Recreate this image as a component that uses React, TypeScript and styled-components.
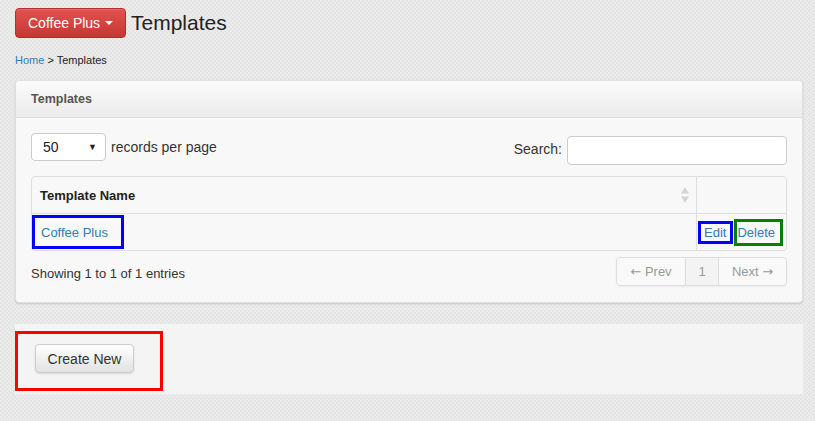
import React from 'react'
import styled, { createGlobalStyle } from 'styled-components'

const GlobalStyle = createGlobalStyle`
    html, body {
        margin: 0;
        padding: 0;
    }
    body {
        font-family: "Liberation Sans", Arial, sans-serif;
        color: #333;
        background-color: #ececec;
        background-image: conic-gradient(#e4e4e4 25%, transparent 0 50%, #e4e4e4 0 75%, transparent 0);
        background-size: 4px 4px;
        min-height: 421px;
    }
`

const Page = styled.div`
    width: 788px;
    padding: 8px 0 0 15px;
`

const Header = styled.div`
    display: flex;
    align-items: center;
    gap: 5px;
    height: 30px;
`

const BrandButton = styled.button`
    display: flex;
    align-items: center;
    box-sizing: border-box;
    width: 111px;
    height: 30px;
    padding: 0 0 0 12px;
    border: 1px solid #b52b27;
    border-radius: 4px;
    background: linear-gradient(#e2534f, #c63632);
    color: #fff;
    font: 14px "Liberation Sans", Arial, sans-serif;
    box-shadow: inset 0 1px 0 rgba(255,255,255,.15);
`

const Caret = styled.span`
    width: 0;
    height: 0;
    margin-left: 5px;
    border-top: 4px solid #fff;
    border-left: 4px solid transparent;
    border-right: 4px solid transparent;
`

const Title = styled.h1`
    margin: 0;
    font-size: 21px;
    font-weight: normal;
    color: #222;
    line-height: 26px;
`

const Breadcrumb = styled.div`
    margin-top: 14px;
    font-size: 11px;
    line-height: 16px;
    color: #222;
`

const Link = styled.a`
    color: #337ab7;
    text-decoration: none;
`

const Panel = styled.div`
    margin-top: 12px;
    border: 1px solid #e0e0e0;
    border-radius: 4px;
    background: #f8f8f8;
    box-shadow: 0 1px 2px rgba(0,0,0,.15);
`

const PanelHeading = styled.div`
    height: 36px;
    display: flex;
    align-items: center;
    padding: 0 15px;
    border-bottom: 1px solid #dcdcdc;
    border-radius: 4px 4px 0 0;
    background: linear-gradient(#fbfbfb, #ebebeb);
    font-size: 12.5px;
    font-weight: bold;
    color: #555;
`

const PanelBody = styled.div`
    padding: 15px 15px 16px;
`

const Controls = styled.div`
    display: flex;
    justify-content: space-between;
    align-items: flex-start;
    height: 32px;
    margin-bottom: 11px;
`

const Group = styled.div<{ $top?: number }>`
    display: flex;
    align-items: center;
    gap: 5px;
    padding-top: ${p => p.$top || 0}px;
    font-size: 14px;
    color: #333;
`

const FakeSelect = styled.div`
    box-sizing: border-box;
    width: 75px;
    height: 28px;
    display: flex;
    align-items: center;
    justify-content: space-between;
    padding: 0 8px 0 11px;
    border: 1px solid #ccc;
    border-radius: 4px;
    background: #fff;
    font-size: 14px;
    color: #222;
    > .arrow {
        font-size: 9px;
    }
`

const SearchLabel = styled.span`
    margin-top: -3px;
`

const SearchInput = styled.input`
    box-sizing: border-box;
    width: 220px;
    height: 29px;
    border: 1px solid #ccc;
    border-radius: 4px;
    background: #fff;
    outline: none;
`

const Table = styled.table`
    width: 100%;
    border-collapse: separate;
    border-spacing: 0;
    border: 1px solid #dedede;
    border-radius: 4px;
    font-size: 13px;
    th, td {
        padding: 0;
        height: 36px;
        text-align: left;
    }
    th {
        border-bottom: 1px solid #dedede;
        font-weight: bold;
        color: #222;
    }
    th + th, td + td {
        border-left: 1px solid #dedede;
        width: 89px;
    }
`

const HeadCell = styled.div`
    display: flex;
    align-items: center;
    justify-content: space-between;
    padding: 0 7px 0 8px;
`

const NameBox = styled.div`
    box-sizing: border-box;
    width: 92px;
    height: 34px;
    display: flex;
    align-items: center;
    padding-left: 6px;
    border: 3px solid #0000ff;
`

const Actions = styled.div`
    display: flex;
    align-items: center;
    justify-content: flex-end;
    gap: 1px;
    padding-right: 3px;
`

const ActionBox = styled.div<{ $color: string; $pad: string; $lh: number }>`
    border: 3px solid ${p => p.$color};
    padding: ${p => p.$pad};
    line-height: ${p => p.$lh}px;
`

const Footer = styled.div`
    display: flex;
    justify-content: space-between;
    align-items: center;
    margin-top: 6px;
    font-size: 13px;
    color: #333;
    > span {
        padding-top: 3px;
    }
`

const Pager = styled.div`
    display: flex;
    border: 1px solid #ddd;
    border-radius: 4px;
    box-shadow: 0 1px 2px rgba(0,0,0,.05);
`

const PageItem = styled.span<{ $active?: boolean; $width: number }>`
    box-sizing: border-box;
    width: ${p => p.$width}px;
    text-align: center;
    line-height: 27px;
    font-size: 13px;
    color: #999;
    background: ${p => (p.$active ? '#f3f3f3' : '#f9f9f9')};
    & + & {
        border-left: 1px solid #ddd;
    }
    &:first-child {
        border-radius: 4px 0 0 4px;
    }
    &:last-child {
        border-radius: 0 4px 4px 0;
    }
`

const Arrow = styled.span`
    font-family: "DejaVu Sans", sans-serif;
    font-size: 13px;
`

const Well = styled.div`
    margin-top: 21px;
    height: 70px;
    padding-top: 7px;
    box-sizing: border-box;
    background: #f4f4f4;
`

const Highlight = styled.div`
    box-sizing: border-box;
    width: 148px;
    height: 60px;
    padding: 10px 0 0 17px;
    border: 3px solid #ff0000;
`

const DefaultButton = styled.button`
    width: 99px;
    height: 29px;
    border: 1px solid #ccc;
    border-radius: 4px;
    background: linear-gradient(#fff, #e2e2e2);
    box-shadow: 0 1px 2px rgba(0,0,0,.12);
    font: 14px "Liberation Sans", Arial, sans-serif;
    color: #333;
`

function SortIcon() {
    return (
        <svg width="8" height="16" viewBox="0 0 8 16">
            <path d="M4 0 L8 6.5 L0 6.5 Z" fill="#d4d4d4" />
            <path d="M0 9.5 L8 9.5 L4 16 Z" fill="#d4d4d4" />
        </svg>
    )
}

function App() {
    return (
        <Page>
            <GlobalStyle />
            <Header>
                <BrandButton>Coffee Plus<Caret /></BrandButton>
                <Title>Templates</Title>
            </Header>
            <Breadcrumb><Link href="#">Home</Link> &gt; Templates</Breadcrumb>
            <Panel>
                <PanelHeading>Templates</PanelHeading>
                <PanelBody>
                    <Controls>
                        <Group>
                            <FakeSelect><span>50</span><span className="arrow">▼</span></FakeSelect>
                            <span>records per page</span>
                        </Group>
                        <Group $top={3}>
                            <SearchLabel>Search:</SearchLabel>
                            <SearchInput />
                        </Group>
                    </Controls>
                    <Table>
                        <thead>
                            <tr>
                                <th><HeadCell>Template Name<SortIcon /></HeadCell></th>
                                <th></th>
                            </tr>
                        </thead>
                        <tbody>
                            <tr>
                                <td><NameBox><Link href="#">Coffee Plus</Link></NameBox></td>
                                <td>
                                    <Actions>
                                        <ActionBox $color="#0000ff" $pad="0 4px 0 3px" $lh={17}><Link href="#">Edit</Link></ActionBox>
                                        <ActionBox $color="#008000" $pad="0 5px 0 0" $lh={21}><Link href="#">Delete</Link></ActionBox>
                                    </Actions>
                                </td>
                            </tr>
                        </tbody>
                    </Table>
                    <Footer>
                        <span>Showing 1 to 1 of 1 entries</span>
                        <Pager>
                            <PageItem $width={68}><Arrow>←</Arrow> Prev</PageItem>
                            <PageItem $width={33} $active>1</PageItem>
                            <PageItem $width={68}>Next <Arrow>→</Arrow></PageItem>
                        </Pager>
                    </Footer>
                </PanelBody>
            </Panel>
            <Well>
                <Highlight>
                    <DefaultButton>Create New</DefaultButton>
                </Highlight>
            </Well>
        </Page>
    )
}

export default App
